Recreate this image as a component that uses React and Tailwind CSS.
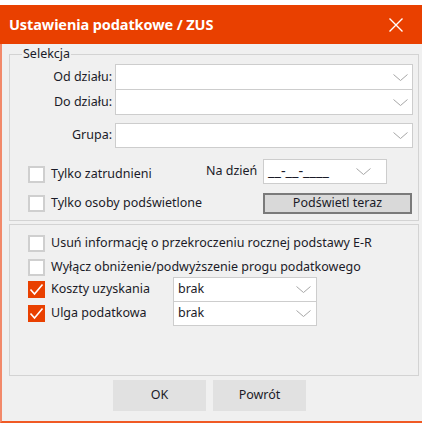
import React from 'react';

const font = { fontFamily: '"Noto Sans", "Open Sans", sans-serif' };

const Chevron = () => (
  <svg width="15" height="7" viewBox="0 0 15 7" className="shrink-0">
    <polyline points="0.5,0.5 7.5,6.5 14.5,0.5" fill="none" stroke="#a6a6a6" strokeWidth="1" />
  </svg>
);

const Combo = ({ className, value, pr = 'pr-[4px]', textClass = '' }) => (
  <div className={`flex items-center justify-between bg-white border border-[#cdcdcd] pl-[4px] ${pr} ${className}`}>
    <span className={textClass}>{value}</span>
    <Chevron />
  </div>
);

const Check = ({ checked }) =>
  checked ? (
    <div className="w-[17px] h-[17px] shrink-0 bg-[#e94000] flex items-center justify-center">
      <svg width="17" height="17" viewBox="0 0 17 17">
        <polyline points="2.5,8.5 6.5,13 14.5,3.5" fill="none" stroke="white" strokeWidth="1.6" />
      </svg>
    </div>
  ) : (
    <div className="w-[17px] h-[17px] shrink-0 bg-white border-2 border-[#cfcfcf]" />
  );

const App = () => {
  return (
    <div className="w-[422px] h-[427px] bg-white pt-[5px] text-[12.5px] text-[#1b1b28]" style={font}>
      <div className="h-[39px] bg-[#e94000] flex items-center justify-between pl-[9px] pr-[19px]">
        <span className="text-white font-bold text-[14.5px] tracking-[-0.1px]">Ustawienia podatkowe / ZUS</span>
        <svg width="14" height="14" viewBox="0 0 14 14">
          <path d="M0.5 0.5 L13.5 13.5 M13.5 0.5 L0.5 13.5" stroke="white" strokeWidth="1.4" />
        </svg>
      </div>

      <div className="h-[379px] bg-[#f0f0f0] border-l-2 border-l-[#f2896a] border-b-2 border-b-[#f05a24] pl-[7px] pr-[3px] pt-[10px]">
        <div className="relative h-[167px] border border-[#d3d3d3] pt-[9px]">
          <span className="absolute -top-[10px] left-[12px] px-[1px] bg-[#f0f0f0] leading-[18px]">Selekcja</span>

          <div className="flex items-center">
            <span className="w-[105px] text-right pr-[3px]">Od działu:</span>
            <Combo className="w-[298px] h-[26px]" />
          </div>
          <div className="flex items-center -mt-px">
            <span className="w-[105px] text-right pr-[3px]">Do działu:</span>
            <Combo className="w-[298px] h-[26px]" />
          </div>
          <div className="flex items-center mt-[8px]">
            <span className="w-[105px] text-right pr-[3px]">Grupa:</span>
            <Combo className="w-[298px] h-[25px]" />
          </div>

          <div className="flex items-center mt-[11px] pl-[18px] h-[25px]">
            <div className="w-[178px] flex items-center gap-[6px] mt-[6px]">
              <Check />
              <span>Tylko zatrudnieni</span>
            </div>
            <span className="w-[57px]">Na dzień</span>
            <Combo className="w-[124px] h-[25px]" pr="pr-[15px]" value="__-__-____" textClass="text-[14.5px] leading-none -mt-[3px]" />
          </div>

          <div className="flex items-center mt-[9px] pl-[18px] h-[21px]">
            <div className="w-[235px] flex items-center gap-[6px]">
              <Check />
              <span>Tylko osoby podświetlone</span>
            </div>
            <div className="w-[149px] h-[21px] border-2 border-[#7a7a7a] bg-[#d9d9d9] flex items-center justify-center">
              Podświetl teraz
            </div>
          </div>
        </div>

        <div className="h-[152px] mt-[3px] border border-[#d3d3d3] pt-[6px] pl-[18px]">
          <div className="h-[24px] flex items-center gap-[6px]">
            <Check />
            <span>Usuń informację o przekroczeniu rocznej podstawy E-R</span>
          </div>
          <div className="h-[24px] flex items-center gap-[6px]">
            <Check />
            <span>Wyłącz obniżenie/podwyższenie progu podatkowego</span>
          </div>
          <div className="h-[25px] flex items-center -mt-[2px]">
            <div className="w-[145px] flex items-center gap-[6px]">
              <Check checked />
              <span>Koszty uzyskania</span>
            </div>
            <Combo className="w-[144px] h-[25px]" pr="pr-[5px]" value="brak" />
          </div>
          <div className="h-[25px] flex items-center -mt-px">
            <div className="w-[145px] flex items-center gap-[6px]">
              <Check checked />
              <span>Ulga podatkowa</span>
            </div>
            <Combo className="w-[144px] h-[25px]" pr="pr-[5px]" value="brak" />
          </div>
        </div>

        <div className="flex gap-[7px] mt-[4px] pl-[104px]">
          <button className="w-[93px] h-[31px] bg-[#e1e1e1]">OK</button>
          <button className="w-[93px] h-[31px] bg-[#e1e1e1]">Powrót</button>
        </div>
      </div>
    </div>
  );
};

export default App;
